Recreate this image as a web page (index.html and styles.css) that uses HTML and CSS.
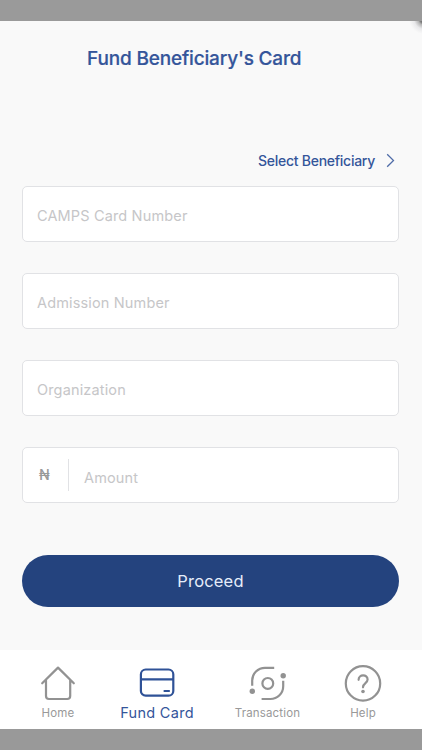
FILE: index.html
```html
<!DOCTYPE html>
<html lang="en">
<head>
<meta charset="utf-8">
<title>Fund Beneficiary's Card</title>
<link rel="stylesheet" href="styles.css">
</head>
<body>
<div class="app">
  <div class="bar-top"></div>
  <main class="screen">
    <h1 class="title">Fund Beneficiary's Card</h1>
    <a class="select"><span>Select Beneficiary</span>
      <svg class="chevron" width="9" height="15" viewBox="0 0 9 15"><path d="M1.2 1.2 7.5 7.5 1.2 13.8"/></svg>
    </a>
    <form class="form">
      <div class="field"><span class="placeholder">CAMPS Card Number</span></div>
      <div class="field"><span class="placeholder">Admission Number</span></div>
      <div class="field"><span class="placeholder">Organization</span></div>
      <div class="field"><span class="currency">₦</span><span class="placeholder amount">Amount</span></div>
      <div class="proceed">Proceed</div>
    </form>
  </main>
  <nav class="tabs">
    <a class="tab home">
      <svg width="40" height="40" viewBox="0 0 40 40"><path d="M4.2 20.3 20 4.6 35.8 20.3M8 17.3V33Q8 36 11 36H29.2Q32.2 36 32.2 33V17.3"/></svg>
      <span>Home</span>
    </a>
    <a class="tab fund active">
      <svg width="40" height="40" viewBox="0 0 40 40"><rect x="3.9" y="6.5" width="32.4" height="26.2" rx="4.8"/><path d="M4 16.3H36M27.5 28H32"/></svg>
      <span>Fund Card</span>
    </a>
    <a class="tab transaction">
      <svg width="40" height="40" viewBox="0 0 40 40"><path d="M4.2 22.8V17.6A12.8 12.8 0 0 1 17 4.8H26.2M35.2 17.8V23.2A12.8 12.8 0 0 1 22.4 36H13.6"/><circle cx="19.8" cy="20.4" r="5.4"/><circle class="dot" cx="4.3" cy="28.3" r="2.7"/><circle class="dot" cx="35.2" cy="12.8" r="2.7"/></svg>
      <span>Transaction</span>
    </a>
    <a class="tab help">
      <svg width="40" height="40" viewBox="0 0 40 40"><circle cx="20" cy="20.4" r="17.2"/><path d="M15.6 16.8C15.6 11 24.6 10.9 24.6 16.6C24.6 20.3 20 20 20 24.3"/><circle class="dot" cx="20" cy="28.5" r="1.8"/></svg>
      <span>Help</span>
    </a>
  </nav>
  <div class="bar-bottom"></div>
</div>
</body>
</html>
```
FILE: styles.css
```css
* { box-sizing: border-box; }
body { margin: 0; font-family: Inter, "Liberation Sans", sans-serif; background: #999; }
.app { width: 422px; height: 750px; display: flex; flex-direction: column; overflow: hidden; }
.bar-top { height: 21px; background: #9a9a9a; }
.screen {
  height: 629px;
  padding: 0 23px 0 22px;
  background: radial-gradient(circle at 424px -2px, #777 4px, #b5b5b5 6px, #e9e9eb 10px, #f9f9f9 15px);
  display: flex;
  flex-direction: column;
}
.title { margin: 24px 0 0 65px; font-size: 19px; line-height: 28px; font-weight: 500; letter-spacing: -0.17px; color: #34559a; white-space: nowrap; -webkit-text-stroke: 0.2px #34559a; }
.select { display: flex; align-items: center; justify-content: flex-end; margin-top: 77px; height: 20px; padding-right: 4px; gap: 11px; font-size: 14px; font-weight: 500; letter-spacing: -0.27px; color: #34559a; white-space: nowrap; }
.chevron { fill: none; stroke: #4f6ca8; stroke-width: 1.3; }
.form { margin: 15.5px 0 0; display: flex; flex-direction: column; gap: 31px; }
.field { height: 56.2px; display: flex; align-items: center; border: 1.3px solid #e1e2e5; border-radius: 5px; background: #fff; padding: 5px 14px 0; }
.placeholder { font-size: 14.5px; line-height: 20px; letter-spacing: 0.15px; color: #c6c6c8; }
.currency { width: 32px; height: 32px; margin-top: -5px; border-right: 1px solid #e1e2e5; padding-left: 2px; font-size: 14px; line-height: 32px; font-weight: 500; color: #999; }
.amount { margin-left: 15px; }
.proceed { height: 52px; margin-top: 20.5px; border-radius: 26px; background: #24437e; color: #e6edfa; font-size: 16.5px; font-weight: 400; letter-spacing: 0.18px; line-height: 52px; text-align: center; }
.tabs { height: 78.5px; background: #fff; display: flex; padding: 13px 7px 0; }
.tab { display: flex; flex-direction: column; align-items: center; color: #999; font-size: 11.5px; letter-spacing: 0.15px; line-height: 18px; white-space: nowrap; }
.tab span { margin-top: 1px; }
.tab svg { fill: none; stroke: #929292; stroke-width: 2.2; stroke-linecap: round; stroke-linejoin: round; }
.tab .dot { fill: #929292; stroke: none; }
.home { width: 102px; }
.fund { width: 96px; }
.transaction { width: 125px; }
.transaction svg { stroke-linecap: butt; }
.help { width: 66px; }
.active { color: #34559a; font-size: 14.5px; letter-spacing: 0.3px; }
.active svg { stroke: #2f5297; }
.bar-bottom { height: 21.5px; background: #999; }
```
